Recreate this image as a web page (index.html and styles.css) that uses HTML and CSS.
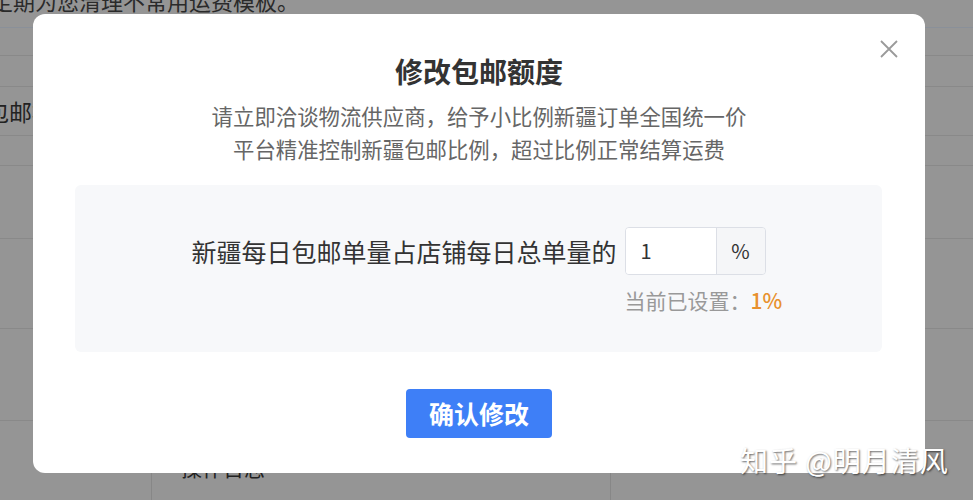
FILE: index.html
```html
<!DOCTYPE html>
<html lang="zh">
<head>
<meta charset="utf-8">
<title>修改包邮额度</title>
<link rel="stylesheet" href="styles.css">
</head>
<body>
<div class="page">
  <div class="notice"><span class="notice-text">定期为您清理不常用运费模板。</span></div>
  <div class="row r1"></div>
  <div class="row r2"></div>
  <div class="row r3"><span class="tab-text">包邮模板</span></div>
  <div class="row r4"></div>
  <div class="row r5"></div>
  <div class="row r6"></div>
  <div class="row r7"></div>
  <div class="row r8">
    <div class="cell c1"></div>
    <div class="cell c2">操作日志</div>
    <div class="cell c3"></div>
  </div>
</div>

<div class="modal">
  <svg class="close" viewBox="0 0 18 18" width="18" height="18"><path d="M1 1 L17 17 M17 1 L1 17" stroke="#9a9a9a" stroke-width="1.8" fill="none"/></svg>
  <div class="title">修改包邮额度</div>
  <div class="subtitle">请立即洽谈物流供应商，给予小比例新疆订单全国统一价<br>平台精准控制新疆包邮比例，超过比例正常结算运费</div>
  <div class="panel">
    <div class="form-grid">
      <div class="label">新疆每日包邮单量占店铺每日总单量的</div>
      <div class="input-group">
        <div class="input">1</div>
        <div class="addon">%</div>
      </div>
      <div class="hint">当前已设置：<span class="hint-val">1%</span></div>
    </div>
  </div>
  <div class="actions"><div class="btn">确认修改</div></div>
</div>

<div class="watermark">知乎 @明月清风</div>
</body>
</html>
```

FILE: styles.css
```css
html, body {
  margin: 0;
  padding: 0;
}
body {
  width: 973px;
  height: 500px;
  overflow: hidden;
  position: relative;
  background: #959595;
  font-family: "Noto Sans CJK SC", "Noto Sans", sans-serif;
}
.page {
  width: 973px;
}
.notice {
  height: 27px;
  border-bottom: 1px solid #8a9099;
  overflow: hidden;
}
.notice-text {
  display: block;
  margin-top: -11px;
  margin-left: -9px;
  font-size: 22px;
  line-height: 22px;
  color: #2a2a2a;
  white-space: nowrap;
}
.row {
  border-bottom: 1px solid #898989;
  box-sizing: border-box;
}
.r1 { height: 28px; }
.r2 { height: 31px; }
.r3 {
  height: 49px;
  overflow: hidden;
}
.tab-text {
  display: block;
  margin-left: -14px;
  font-size: 23px;
  line-height: 48px;
  color: #222;
  white-space: nowrap;
}
.r4 { height: 30px; }
.r5 { height: 73px; }
.r6 { height: 90px; }
.r7 { height: 92px; }
.r8 {
  height: 80px;
  border-bottom: none;
  display: grid;
  grid-template-columns: 152px 459px 1fr;
}
.cell {
  border-right: 1px solid #878787;
}
.c3 { border-right: none; }
.c2 {
  padding: 33px 0 0 29px;
  font-size: 21px;
  line-height: 26px;
  color: #222;
}

.modal {
  position: absolute;
  left: 33px;
  top: 14px;
  width: 892px;
  height: 459px;
  box-sizing: border-box;
  background: #fff;
  border-radius: 12px;
  padding-top: 37px;
  text-align: center;
}
.close {
  position: absolute;
  top: 26px;
  right: 27px;
}
.title {
  font-size: 28px;
  line-height: 40px;
  font-weight: 700;
  color: #333;
}
.subtitle {
  margin-top: 8px;
  font-size: 21.4px;
  line-height: 33px;
  color: #666;
}
.panel {
  margin: 20px 43px 0 42px;
  height: 167px;
  box-sizing: border-box;
  padding-top: 42px;
  background: #f7f8fa;
  border-radius: 6px;
}
.form-grid {
  display: grid;
  grid-template-columns: auto 141px;
  justify-content: center;
  column-gap: 8px;
  row-gap: 11px;
}
.label {
  font-size: 25px;
  line-height: 48px;
  color: #333;
  white-space: nowrap;
}
.input-group {
  display: flex;
  width: 141px;
  height: 48px;
  box-sizing: border-box;
  border: 1px solid #dcdfe6;
  border-radius: 4px;
  overflow: hidden;
  text-align: left;
}
.input {
  width: 90px;
  background: #fff;
  padding-left: 15px;
  box-sizing: border-box;
  font-size: 20px;
  line-height: 46px;
  color: #333;
}
.addon {
  flex: 1;
  background: #f5f6f8;
  border-left: 1px solid #dcdfe6;
  font-size: 20px;
  line-height: 46px;
  color: #333;
  text-align: center;
}
.hint {
  grid-column: 2;
  text-align: left;
  font-size: 21px;
  line-height: 28px;
  color: #999;
  white-space: nowrap;
}
.hint-val {
  color: #e8912e;
  font-weight: 500;
}
.actions {
  margin-top: 37px;
}
.btn {
  display: inline-block;
  width: 146px;
  height: 49px;
  line-height: 49px;
  background: #3e7ff7;
  color: #fff;
  font-size: 25px;
  font-weight: 700;
  border-radius: 4px;
}
.watermark {
  position: absolute;
  left: 740px;
  top: 440px;
  font-size: 28px;
  line-height: 40px;
  letter-spacing: 1px;
  color: #fff;
  white-space: nowrap;
  text-shadow: 1px 1px 2px rgba(0,0,0,0.6);
}
```
